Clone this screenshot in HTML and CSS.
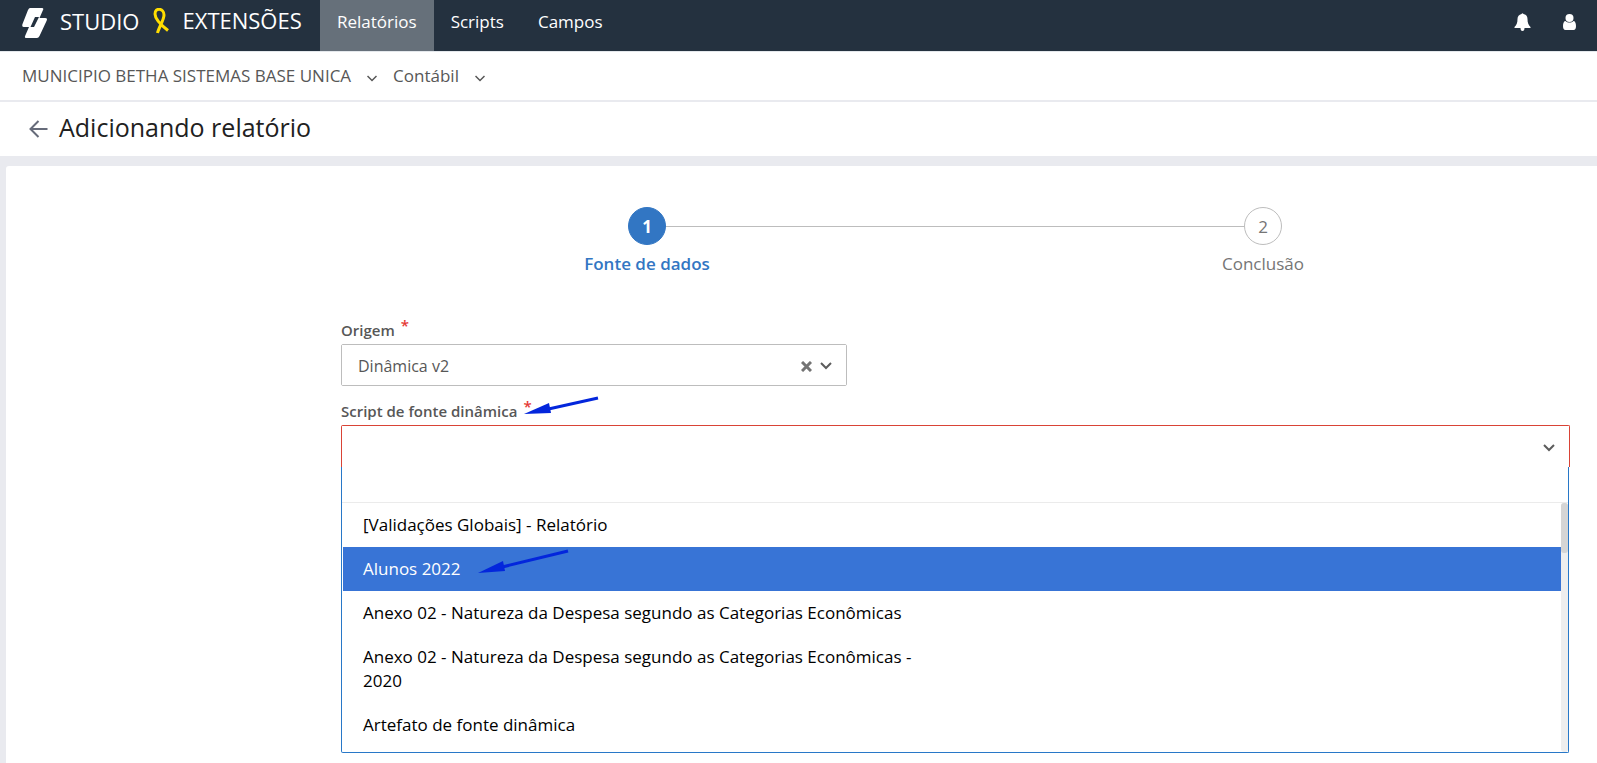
FILE: index.html
```html
<!DOCTYPE html>
<html lang="pt-BR">
<head>
<meta charset="utf-8">
<meta name="viewport" content="width=device-width, initial-scale=1">
<title>Adicionando relatório</title>
<link rel="stylesheet" href="styles.css">
</head>
<body>
<header class="topbar">
  <a class="brand" href="#">
    <svg class="brand-logo" width="26" height="31" viewBox="0 0 26 31" aria-hidden="true"><path fill="#fff" fill-rule="evenodd" d="M8 0H20Q22 0 21 2L17.500 10H23Q26 10 24.500 13L17.500 28Q16.500 30 15 30H4Q2 30 3.500 27L7 19H2Q-.5 19 .5 16L6 2Q7 0 8 0ZM13 9L8.500 19H12L17 9Z"/></svg>
    <span>STUDIO</span>
    <svg class="brand-ribbon" width="17" height="26" viewBox="0 0 17 26" aria-hidden="true"><path fill="none" stroke="#fd0" stroke-width="3" stroke-linejoin="round" d="M4.500 25C6 19 11 12 11 7C11 0 2 -1 2 6C2 11 8 17 15 22.500"/></svg>
    <span class="brand-name">EXTENSÕES</span>
  </a>
  <nav class="tabs">
    <a class="tab tab-active" href="#" aria-current="page">Relatórios</a>
    <a class="tab" href="#">Scripts</a>
    <a class="tab" href="#">Campos</a>
  </nav>
  <div class="actions">
    <button class="icon-button" type="button" aria-label="Notificações">
      <svg width="17" height="18" viewBox="0 0 17 18" aria-hidden="true"><path fill="#fff" d="M7.500 1Q8.500-.5 9.500 1C12 1.500 13.500 3.500 13.500 6C13.500 10 14.500 12 16.500 14V15H10.500Q10.500 18 8.500 18T6.500 15H.5V14C2.500 12 3.500 10 3.500 6C3.500 3.500 5 1.500 7.500 1Z"/></svg>
    </button>
    <button class="icon-button" type="button" aria-label="Usuário">
      <svg width="13" height="18" viewBox="0 0 13 18" aria-hidden="true"><circle cx="6.500" cy="5" r="4" fill="#fff"/><path fill="#fff" d="M2.500 8C4.500 10 8.500 10 10.500 8C12 8 13 10 13 13Q13 17 10.500 17H2.500Q0 17 0 13C0 10 1 8 2.500 8Z"/></svg>
    </button>
  </div>
</header>

<div class="context">
  <button class="context-item" type="button">MUNICIPIO BETHA SISTEMAS BASE UNICA
    <svg width="10" height="7" viewBox="0 0 10 7" aria-hidden="true"><path class="stroke-thin" d="M.5 1L5 5.500L9.500 1"/></svg>
  </button>
  <button class="context-item" type="button">Contábil
    <svg width="10" height="7" viewBox="0 0 10 7" aria-hidden="true"><path class="stroke-thin" d="M.5 1L5 5.500L9.500 1"/></svg>
  </button>
</div>

<div class="page-title">
  <a class="back" href="#" aria-label="Voltar">
    <svg width="19" height="18" viewBox="0 0 19 18" aria-hidden="true"><path fill="none" stroke="#666b7a" stroke-width="2" d="M18.500 9H2M9.500 1L1.500 9L9.500 17"/></svg>
  </a>
  <h1>Adicionando relatório</h1>
</div>

<main class="panel">
  <ol class="steps">
    <li class="step step-current" aria-current="step"><span class="step-number">1</span><span>Fonte de dados</span></li>
    <li class="step"><span class="step-number">2</span><span>Conclusão</span></li>
  </ol>

  <form class="form">
    <div class="field">
      <div class="label-row"><label for="origem">Origem</label><span class="required">*</span></div>
      <div class="control control-short">
        <select class="select" id="origem"><option>Dinâmica v2</option></select>
        <div class="control-icons">
          <button class="clear" type="button" aria-label="Limpar">
            <svg width="11" height="11" viewBox="0 0 11 11" aria-hidden="true"><path fill="none" stroke="#737373" stroke-width="3" d="M1 1L10 10M10 1L1 10"/></svg>
          </button>
          <svg width="12" height="8" viewBox="0 0 12 8" aria-hidden="true"><path class="stroke-bold" d="M1 1L6 6L11 1"/></svg>
        </div>
      </div>
    </div>

    <div class="field">
      <div class="label-row"><label for="script">Script de fonte dinâmica</label><span class="required">*</span>
        <svg class="pointer pointer-label" width="76" height="20" viewBox="0 0 76 20" aria-hidden="true"><path stroke="#0326dc" stroke-width="3" d="M20 14L74 2"/><path fill="#0326dc" d="M0 18L25 7L27 17Z"/></svg>
      </div>
      <div class="control control-invalid">
        <select class="select" id="script" aria-invalid="true"><option></option></select>
        <div class="control-icons">
          <svg width="12" height="8" viewBox="0 0 12 8" aria-hidden="true"><path class="stroke-bold" d="M1 1L6 6L11 1"/></svg>
        </div>
      </div>
      <div class="dropdown">
        <input class="search" type="text" aria-label="Pesquisar script">
        <div class="results">
          <ul class="options" role="listbox" aria-label="Scripts">
            <li class="option" role="option"><span>[Validações Globais] - Relatório</span></li>
            <li class="option option-active" role="option" aria-selected="true"><span>Alunos 2022</span>
              <svg class="pointer pointer-option" width="92" height="26" viewBox="0 0 92 26" aria-hidden="true"><path stroke="#0326dc" stroke-width="3" d="M20 19L90 2"/><path fill="#0326dc" d="M0 24L25 12L27 22Z"/></svg>
            </li>
            <li class="option" role="option"><span>Anexo 02 - Natureza da Despesa segundo as Categorias Econômicas</span></li>
            <li class="option" role="option"><span>Anexo 02 - Natureza da Despesa segundo as Categorias Econômicas - 2020</span></li>
            <li class="option" role="option"><span>Artefato de fonte dinâmica</span></li>
          </ul>
          <div class="track"><div class="thumb"></div></div>
        </div>
      </div>
    </div>
  </form>
</main>
</body>
</html>
```
FILE: styles.css
```css
* { box-sizing: border-box; }

body {
  margin: 0;
  background: #e9eaef;
  color: #575757;
  font-family: "Open Sans", sans-serif;
  font-size: 17px;
  line-height: 24px;
}

button, input, select { font: inherit; color: inherit; }
button { border: 0; padding: 0; background: none; }
a { color: inherit; text-decoration: none; }
svg { display: block; flex: none; }

.stroke-thin { fill: none; stroke: #575757; stroke-width: 1.5; }
.stroke-bold { fill: none; stroke: #5c5c5c; stroke-width: 2; }

.topbar {
  display: flex;
  height: 51px;
  background: #24313f;
  color: #fff;
}
.brand {
  display: flex;
  align-items: flex-start;
  width: 320px;
  padding: 8px 0 0 22px;
  font-size: 22px;
  line-height: 26px;
}
.brand-logo { margin-right: 12px; }
.brand-ribbon { margin: 0 12px 0 14px; }
.brand-name { line-height: 24px; }
.tabs { display: flex; }
.tab { padding: 10px 17px; }
.tab-active { background: #66707a; }
.actions {
  display: flex;
  align-items: flex-start;
  gap: 32px;
  margin-left: auto;
  padding: 13px 21px 0 0;
}

.context {
  display: flex;
  gap: 16px;
  padding: 12px 22px;
  background: #fff;
  border-top: 1px solid #e4e8ec;
  border-bottom: 2px solid #e9eaef;
}
.context-item {
  display: flex;
  align-items: center;
  gap: 16px;
}
.context-item svg { margin-top: 4px; }

.page-title {
  display: flex;
  align-items: center;
  gap: 11px;
  height: 54px;
  padding: 0 29px;
  background: #fff;
}
.page-title h1 {
  margin: 0;
  color: #212121;
  font-size: 25px;
  font-weight: 400;
  line-height: 34px;
  padding-bottom: 4px;
}

.panel {
  margin: 10px 0 0 6px;
  padding: 41px 27px 10px 335px;
  min-height: calc(100vh - 166px);
  background: #fff;
  border-radius: 3px 0 0 0;
}

.steps {
  display: flex;
  margin: 0 -1px 0 -2px;
  padding: 0;
  list-style: none;
}
.step {
  position: relative;
  display: flex;
  flex: 1;
  flex-direction: column;
  align-items: center;
  gap: 7px;
  color: #757575;
}
.step + .step::before {
  content: "";
  position: absolute;
  top: 19px;
  left: -50%;
  width: 100%;
  border-top: 1px solid #bdbdbd;
}
.step-number {
  position: relative;
  z-index: 1;
  width: 38px;
  height: 38px;
  background: #fff;
  border: 1px solid #bdbdbd;
  border-radius: 50%;
  line-height: 37px;
  text-align: center;
}
.step-current { color: #3276c3; font-weight: 600; }
.step-current .step-number {
  z-index: 2;
  background: #3276c3;
  border-color: #3276c3;
  color: #fff;
  font-weight: 700;
}

.form {
  display: flex;
  flex-direction: column;
  gap: 13px;
  margin-top: 42px;
}
.label-row {
  position: relative;
  display: flex;
  gap: 6px;
  height: 26px;
  font-size: 15px;
  font-weight: 600;
  line-height: 25px;
}
.required { color: #e53935; line-height: 14px; }

.control {
  position: relative;
  height: 42px;
  border: 1px solid #bdbdbd;
  border-radius: 2px;
}
.control-short { max-width: 506px; }
.control-invalid {
  border-color: #d94336;
  border-bottom: 0;
  border-radius: 2px 2px 0 0;
}
.select {
  width: 100%;
  height: 40px;
  padding: 2px 50px 0 16px;
  appearance: none;
  background: #fff;
  border: 0;
  outline: 0;
  font-size: 16px;
}
.control-icons {
  position: absolute;
  inset: 2px 14px 0 auto;
  display: flex;
  align-items: center;
  gap: 8px;
}

.dropdown {
  margin-right: 1px;
  border: 1px solid #2878c8;
  border-top: 0;
  border-radius: 0 0 2px 2px;
  color: #000;
}
.search {
  display: block;
  width: 100%;
  height: 36px;
  padding: 0 20px;
  border: 0;
  border-bottom: 1px solid #ebebeb;
  outline: 0;
}
.results { display: flex; padding-left: 1px; }
.options {
  flex: 1;
  margin: 0;
  padding: 0 0 5px;
  list-style: none;
}
.option { position: relative; padding: 10px 20px; }
.option span { display: block; max-width: 580px; }
.option-active { background: #3874d6; color: #fff; }
.track { width: 7px; background: #eee; border-radius: 3px; }
.thumb { height: 50px; background: #d5d5d5; border-radius: 3px; }

.pointer { position: absolute; }
.pointer-label { left: 183px; top: -3px; }
.pointer-option { left: 135px; top: 2px; }
```
